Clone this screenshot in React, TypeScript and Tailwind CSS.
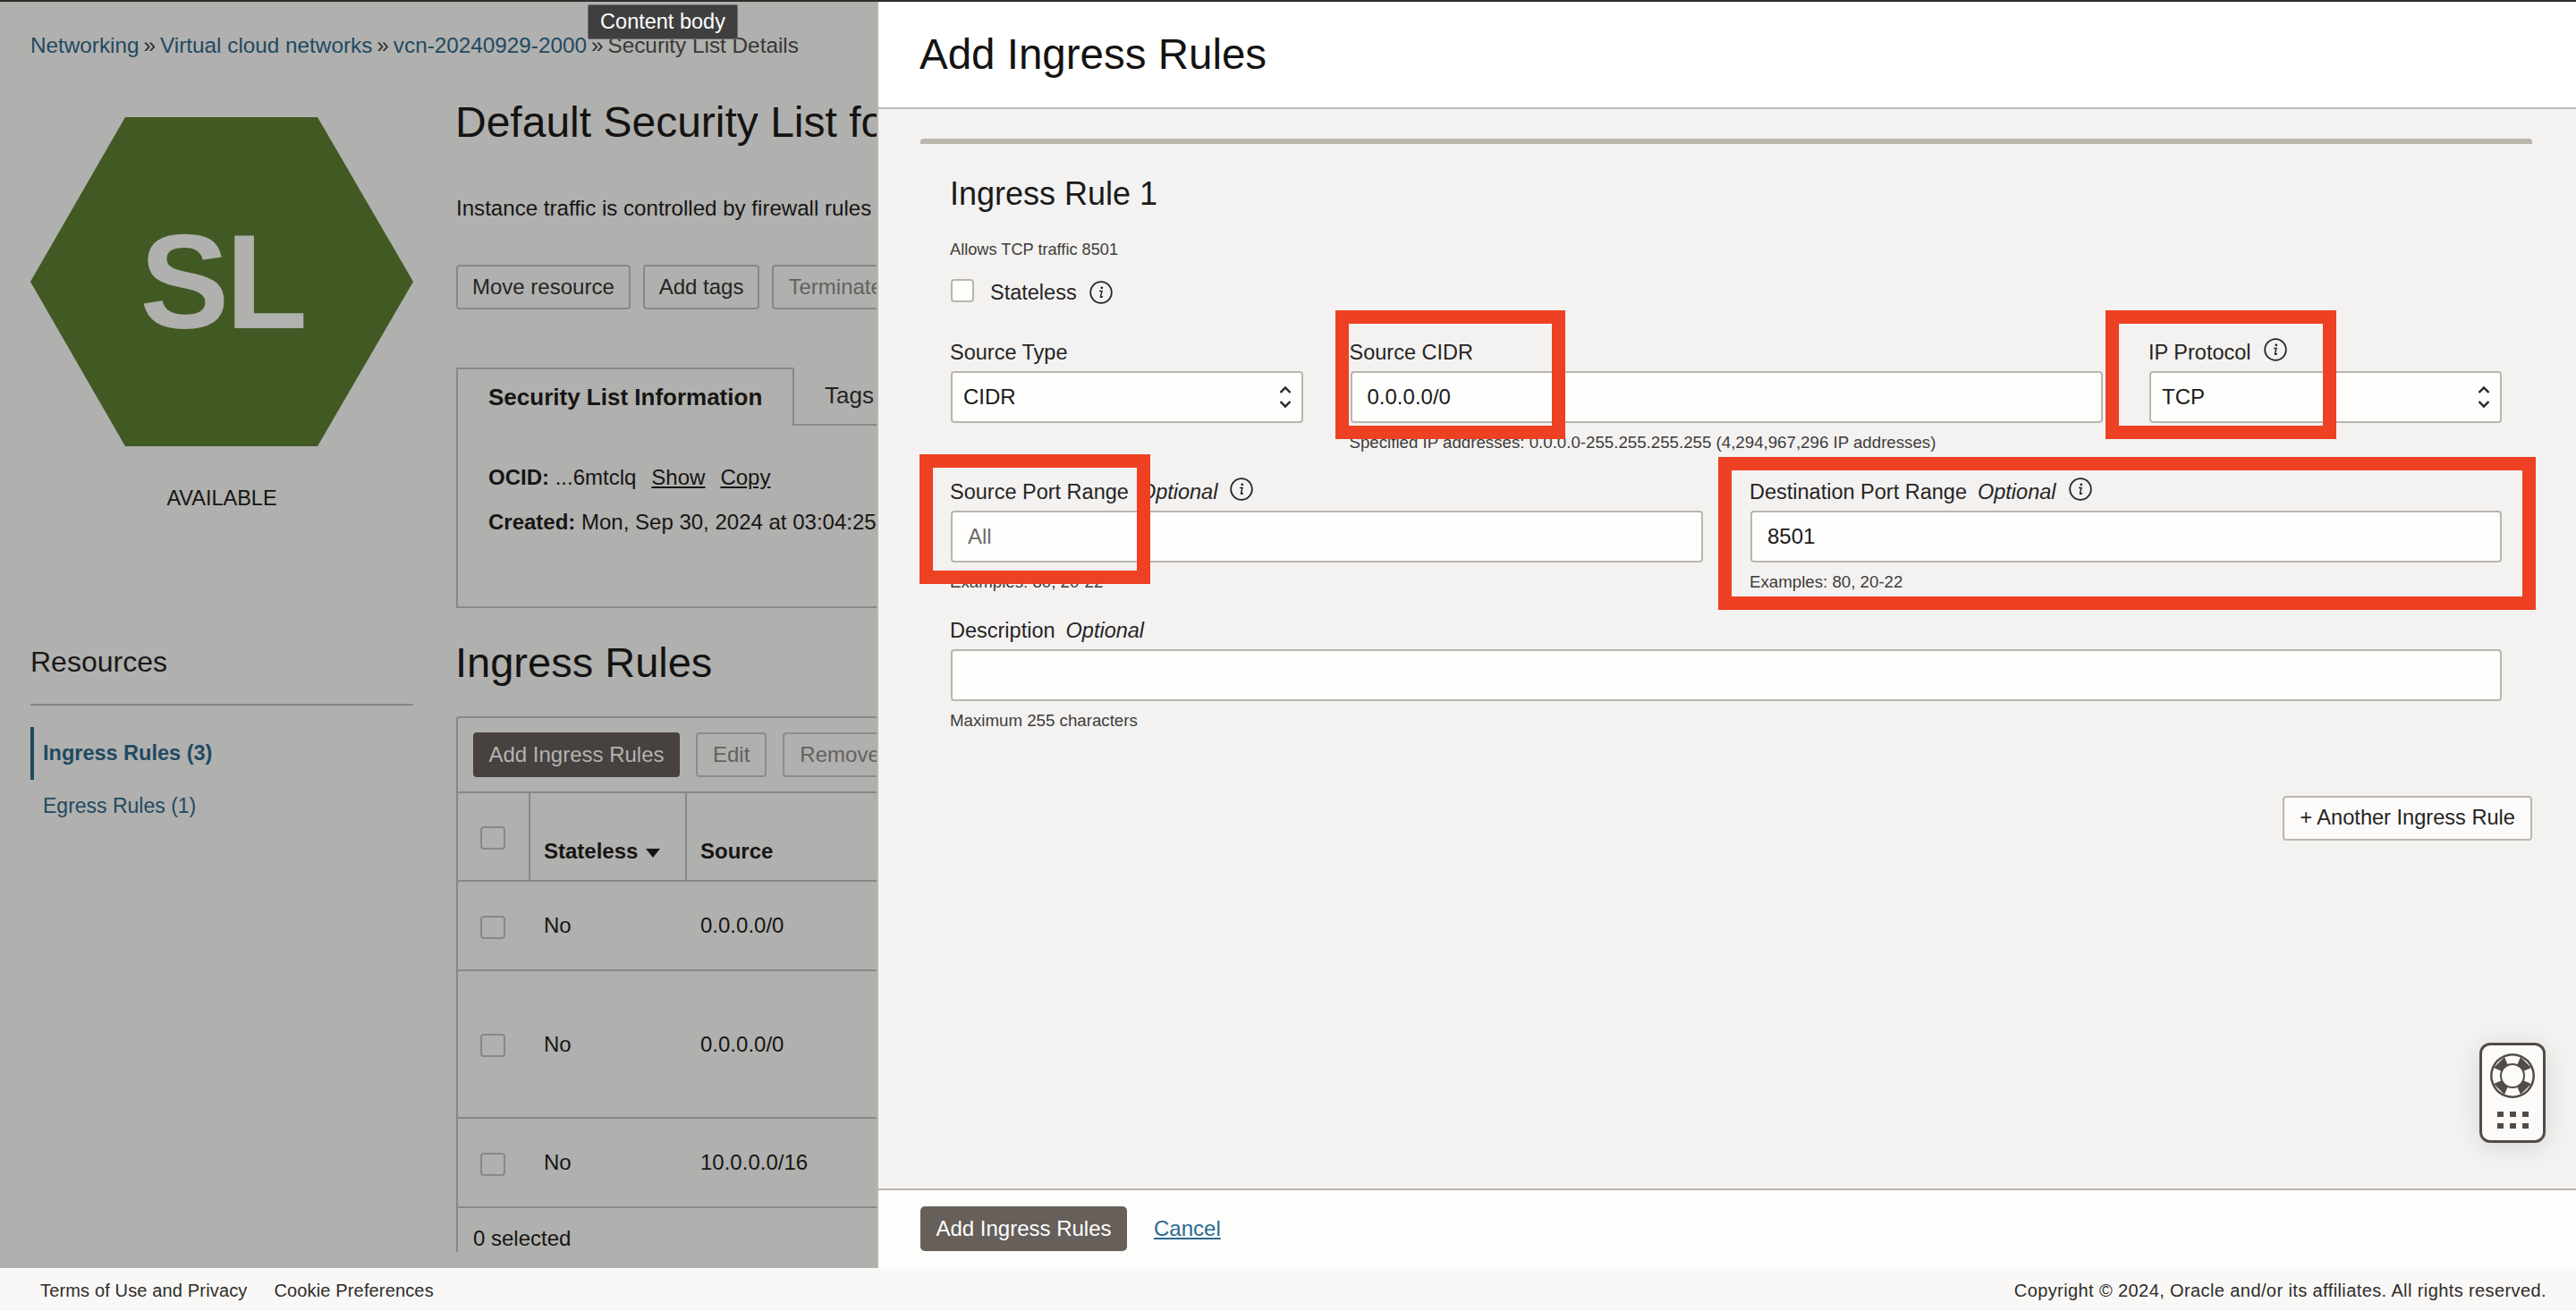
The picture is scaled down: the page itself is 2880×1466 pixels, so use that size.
const RED_BOX = 'absolute border-[15px] border-[#ee4023] pointer-events-none';

function InfoIcon() {
  return (
    <svg width="26" height="26" viewBox="0 0 26 26" fill="none" className="flex-shrink-0">
      <circle cx="13" cy="13" r="11.8" stroke="#262423" strokeWidth="1.8" />
      <circle cx="13.8" cy="7.8" r="1.4" fill="#262423" />
      <path d="M11.6 11.4h2.4l-1.5 6.2c-.2.9.7 1.1 1.9.1" stroke="#262423" strokeWidth="1.5" strokeLinecap="round" />
    </svg>
  );
}

function SelectCarets() {
  return (
    <svg width="14" height="26" viewBox="0 0 14 26" fill="none" className="flex-shrink-0">
      <path d="M1.5 8 7 2.5 12.5 8M1.5 18 7 23.5 12.5 18" stroke="#262423" strokeWidth="2.4" />
    </svg>
  );
}

function DimCheckbox() {
  return <span className="block w-[28px] h-[26px] rounded-[4px] border-2 border-[#8a8886]" />;
}

function SmallHelp({ children }: { children: string }) {
  return <p className="mt-[10px] -ml-px text-[18.7px] leading-[24px] text-[#3f3c3a] whitespace-nowrap">{children}</p>;
}

function FieldLabel({ children, optional, info }: { children: string; optional?: boolean; info?: boolean }) {
  return (
    <div className="h-[30px] mb-[6px] pt-[2px] -ml-px flex items-center text-[23.5px] text-[#262423] whitespace-nowrap">
      <span>{children}</span>
      {optional && <span className="italic ml-[12px]">Optional</span>}
      {info && (
        <span className="ml-[14px] -mt-[8px]">
          <InfoIcon />
        </span>
      )}
    </div>
  );
}

function TextBox({ value, placeholder }: { value?: string; placeholder?: string }) {
  return (
    <div className="h-[58px] bg-[#fefefd] border-2 border-[#bab5ae] rounded-[4px] flex items-center px-[17px] text-[24px]">
      {value && <span className="text-[#1c1a19]">{value}</span>}
      {placeholder && <span className="text-[#6f6b68]">{placeholder}</span>}
    </div>
  );
}

function SelectBox({ value }: { value: string }) {
  return (
    <div className="h-[58px] bg-[#fefefd] border-2 border-[#bab5ae] rounded-[4px] flex items-center justify-between pl-[12px] pr-[11px] text-[24px] text-[#1c1a19]">
      <span>{value}</span>
      <SelectCarets />
    </div>
  );
}

function RuleRow({ source, height }: { source: string; height: string }) {
  return (
    <div className={`flex items-center border-b-2 border-[#8a8886] text-[24px] text-[#171514] ${height}`}>
      <div className="w-[81px] pl-[25px] pt-[3px]">
        <DimCheckbox />
      </div>
      <div className="w-[175px] pl-[15px]">No</div>
      <div className="pl-[15px]">{source}</div>
    </div>
  );
}

function LeftPage() {
  return (
    <div className="w-[980px] flex-shrink-0 bg-[#b0b0ae] overflow-hidden">
      <div className="h-[98px] pl-[34px] flex items-center gap-[5px] text-[24.3px] whitespace-nowrap text-[#1f4a62]">
        <span>Networking</span>
        <span className="text-[#2f2d2c]">»</span>
        <span>Virtual cloud networks</span>
        <span className="text-[#2f2d2c]">»</span>
        <span>vcn-20240929-2000</span>
        <span className="text-[#2f2d2c]">»</span>
        <span className="text-[#3a3836]">Security List Details</span>
      </div>

      <div className="flex">
        {/* Sidebar */}
        <div className="w-[510px] flex-shrink-0 pl-[34px] pr-[48px]">
          <div className="relative mt-[31px] w-[428px] h-[368px]">
            <svg width="428" height="368" viewBox="0 0 428 368" className="block">
              <polygon points="106,0 321,0 428,184 321,368 106,368 0,184" fill="#415a24" />
            </svg>
            <span className="absolute inset-0 flex items-center justify-center text-[150px] font-bold tracking-[-4px] text-[#b0b0ae] leading-none">
              SL
            </span>
          </div>
          <p className="mt-[43px] text-center text-[23.5px] leading-[30px] text-[#171514]">AVAILABLE</p>
          <h2 className="mt-[148px] pb-[27px] border-b-2 border-[#858585] text-[32px] leading-[40px] text-[#1a1817]">Resources</h2>
          <div className="mt-[24px] h-[59px] border-l-4 border-[#1f4a62] pl-[10px] flex items-center text-[23.5px] font-bold text-[#1f4a62]">
            Ingress Rules (3)
          </div>
          <div className="h-[59px] pl-[14px] flex items-center text-[23px] text-[#1f4a62]">Egress Rules (1)</div>
        </div>

        {/* Main */}
        <div className="flex-1 min-w-0 overflow-hidden whitespace-nowrap">
          <h1 className="mt-[9px] -ml-px text-[48px] leading-[56px] text-[#141312]">Default Security List for vcn-20240929-2000</h1>
          <p className="mt-[53px] text-[24.1px] leading-[30px] text-[#171514]">Instance traffic is controlled by firewall rules</p>
          <div className="mt-[48px] flex gap-[14px] text-[24px]">
            <span className="h-[50px] px-[16px] flex items-center border-2 border-[#8a8886] rounded-[4px] text-[#262423]">Move resource</span>
            <span className="h-[50px] px-[16px] flex items-center border-2 border-[#8a8886] rounded-[4px] text-[#262423]">Add tags</span>
            <span className="h-[50px] px-[16px] flex items-center border-2 border-[#8a8886] rounded-[4px] text-[#64615f]">Terminate</span>
          </div>

          <div className="mt-[65px] w-[900px] flex h-[65px]">
            <div className="w-[378px] border-2 border-b-0 border-[#8a8886] pl-[34px] flex items-center text-[26px] font-bold text-[#171514]">
              Security List Information
            </div>
            <div className="flex-1 border-b-2 border-[#8a8886] pl-[34px] flex items-center text-[26px] text-[#262423]">Tags</div>
          </div>
          <div className="w-[900px] h-[204px] border-2 border-t-0 border-[#8a8886] pl-[34px] pt-[43px] text-[24px] text-[#171514]">
            <p className="leading-[30px]">
              <b>OCID:</b> ...6mtclq
              <span className="underline ml-[17px]">Show</span>
              <span className="underline ml-[17px]">Copy</span>
            </p>
            <p className="mt-[20px] leading-[30px]">
              <b>Created:</b> Mon, Sep 30, 2024 at 03:04:25 UTC
            </p>
          </div>

          <h2 className="mt-[33px] -ml-px text-[47px] leading-[56px] text-[#141312]">Ingress Rules</h2>

          <div className="mt-[32px] w-[900px] border-l-2 border-t-2 border-[#8a8886] rounded-tl-[4px]">
            <div className="h-[84px] pt-[16px] pl-[17px] flex gap-[18px] border-b-2 border-[#8a8886] text-[24px]">
              <span className="h-[50px] w-[231px] flex items-center justify-center rounded-[4px] bg-[#47423f] text-[#b5b3b1]">Add Ingress Rules</span>
              <span className="h-[50px] px-[17px] flex items-center rounded-[4px] border-2 border-[#8e8c8a] text-[#64615f]">Edit</span>
              <span className="h-[50px] px-[17px] flex items-center rounded-[4px] border-2 border-[#8e8c8a] text-[#64615f]">Remove</span>
            </div>
            <div className="h-[99px] flex border-b-2 border-[#8a8886] text-[24px] font-bold text-[#171514]">
              <div className="w-[81px] pl-[25px] pt-[37px] border-r-2 border-[#8a8886]">
                <DimCheckbox />
              </div>
              <div className="w-[175px] pl-[15px] pb-[14px] flex items-end gap-[9px] border-r-2 border-[#8a8886]">
                Stateless
                <svg width="16" height="10" viewBox="0 0 16 10" className="mb-[11px]">
                  <polygon points="0,0 16,0 8,10" fill="#171514" />
                </svg>
              </div>
              <div className="pl-[15px] pb-[14px] flex items-end">Source</div>
            </div>
            <RuleRow source="0.0.0.0/0" height="h-[100px]" />
            <RuleRow source="0.0.0.0/0" height="h-[165px]" />
            <RuleRow source="10.0.0.0/16" height="h-[100px]" />
            <div className="pl-[17px] pt-[19px] text-[24px] leading-[30px] text-[#171514]">0 selected</div>
          </div>
        </div>
      </div>
    </div>
  );
}

function IngressPanel() {
  return (
    <div className="flex-1 min-w-0 flex flex-col border-l-2 border-[#bab5ae]">
      <div className="h-[120px] flex-shrink-0 bg-white border-b-2 border-[#c0bcb6] pl-[46px] flex items-center text-[47.5px] text-[#141312]">
        Add Ingress Rules
      </div>

      <div className="flex-1 min-h-0 bg-[#f3f2f1] pl-[47px] pr-[49px] pt-[33px]">
        <div className="h-[6px] bg-[#bab5ad] rounded-t-[4px]" />
        <div className="pl-[34px] pr-[34px]">
          <h3 className="mt-[34px] text-[36px] leading-[44px] -ml-px text-[#1c1a19]">Ingress Rule 1</h3>
          <p className="mt-[28px] -ml-px text-[18.2px] leading-[24px] text-[#3f3c3a]">Allows TCP traffic 8501</p>
          <div className="mt-[21px] h-[30px] flex items-center text-[23.5px] text-[#262423]">
            <span className="w-[26px] h-[26px] -mt-[4px] rounded-[4px] border-2 border-[#bab5ae] bg-[#fefefd]" />
            <span className="ml-[18px] pt-[2px]">Stateless</span>
            <span className="ml-[14px]">
              <InfoIcon />
            </span>
          </div>

          <div className="mt-[37px] grid grid-cols-[394px_841px_394px] gap-x-[52.5px]">
            <div>
              <FieldLabel>Source Type</FieldLabel>
              <SelectBox value="CIDR" />
            </div>
            <div>
              <FieldLabel>Source CIDR</FieldLabel>
              <TextBox value="0.0.0.0/0" />
              <SmallHelp>Specified IP addresses: 0.0.0.0-255.255.255.255 (4,294,967,296 IP addresses)</SmallHelp>
            </div>
            <div>
              <FieldLabel info>IP Protocol</FieldLabel>
              <SelectBox value="TCP" />
            </div>
          </div>

          <div className="mt-[28px] grid grid-cols-2 gap-x-[52px]">
            <div>
              <FieldLabel optional info>Source Port Range</FieldLabel>
              <TextBox placeholder="All" />
              <SmallHelp>Examples: 80, 20-22</SmallHelp>
            </div>
            <div className="pl-px">
              <FieldLabel optional info>Destination Port Range</FieldLabel>
              <TextBox value="8501" />
              <SmallHelp>Examples: 80, 20-22</SmallHelp>
            </div>
          </div>

          <div className="mt-[27px]">
            <FieldLabel optional>Description</FieldLabel>
            <TextBox />
            <SmallHelp>Maximum 255 characters</SmallHelp>
          </div>
        </div>

        <div className="mt-[72px] flex justify-end">
          <span className="h-[50px] px-[17px] flex items-center bg-[#fcfbfa] border-2 border-[#bab5ae] rounded-[4px] text-[23.6px] text-[#262423]">
            + Another Ingress Rule
          </span>
        </div>
      </div>

      <div className="h-[89px] flex-shrink-0 bg-[#fdfdfb] border-t-2 border-[#bab5ae] pl-[47px] pt-[18px] flex gap-[30px] text-[24px]">
        <span className="h-[50px] w-[231px] flex items-center justify-center rounded-[5px] bg-[#665f5a] text-white">Add Ingress Rules</span>
        <span className="h-[50px] flex items-center underline text-[#2a6a90]">Cancel</span>
      </div>
    </div>
  );
}

function HelpWidget() {
  return (
    <div className="absolute left-[2772px] top-[1166px] w-[74px] h-[112px] bg-[#fcfbfa] border-[3px] border-[#514c47] rounded-[12px] shadow-[0_4px_28px_rgba(0,0,0,0.12)] flex flex-col items-center pt-[8px]">
      <svg width="52" height="52" viewBox="-26 -26 52 52">
        <circle r="25" fill="#514c47" />
        <circle r="22.5" fill="#fcfbfa" />
        <g fill="#514c47">
          <polygon points="0,0 -21,-9 -9,-21" />
          <polygon points="0,0 21,-9 9,-21" />
          <polygon points="0,0 -21,9 -9,21" />
          <polygon points="0,0 21,9 9,21" />
        </g>
        <circle r="14" fill="#514c47" />
        <circle r="12" fill="#fcfbfa" />
      </svg>
      <div className="mt-[14px] grid grid-cols-3 gap-x-[7px] gap-y-[7px]">
        {[0, 1, 2, 3, 4, 5].map((dot) => (
          <span key={dot} className="w-[7px] h-[6px] bg-[#514c47]" />
        ))}
      </div>
    </div>
  );
}

export default function App() {
  return (
    <div className="relative w-[2880px] h-[1466px] overflow-hidden flex flex-col font-['Liberation_Sans',Arial,sans-serif]">
      <div className="h-[2px] flex-shrink-0 bg-[#312d2a]" />
      <div className="flex-1 min-h-0 flex">
        <LeftPage />
        <IngressPanel />
      </div>
      <div className="h-[48px] flex-shrink-0 bg-[#f9f8f6] pl-[45px] pr-[33px] pt-[2px] flex items-center text-[20px] text-[#2f2c2a]">
        <span className="tracking-[0.15px]">Terms of Use and Privacy</span>
        <span className="ml-[30px] tracking-[0.15px]">Cookie Preferences</span>
        <span className="ml-auto tracking-[0.4px]">Copyright © 2024, Oracle and/or its affiliates. All rights reserved.</span>
      </div>

      {/* Tooltip */}
      <div className="absolute left-[657px] top-[5px] w-[168px] h-[39px] bg-[#3f3f3f] border border-[#6a6a6a] rounded-[2px] flex items-center justify-center text-[23.5px] text-white">
        Content body
      </div>

      {/* Red annotation boxes */}
      <div className={`${RED_BOX} left-[1493px] top-[347px] w-[257px] h-[144px]`} />
      <div className={`${RED_BOX} left-[1028px] top-[508px] w-[258px] h-[145px]`} />
      <div className={`${RED_BOX} left-[2354px] top-[347px] w-[258px] h-[144px]`} />
      <div className={`${RED_BOX} left-[1921px] top-[511px] w-[914px] h-[171px]`} />

      <HelpWidget />
    </div>
  );
}
